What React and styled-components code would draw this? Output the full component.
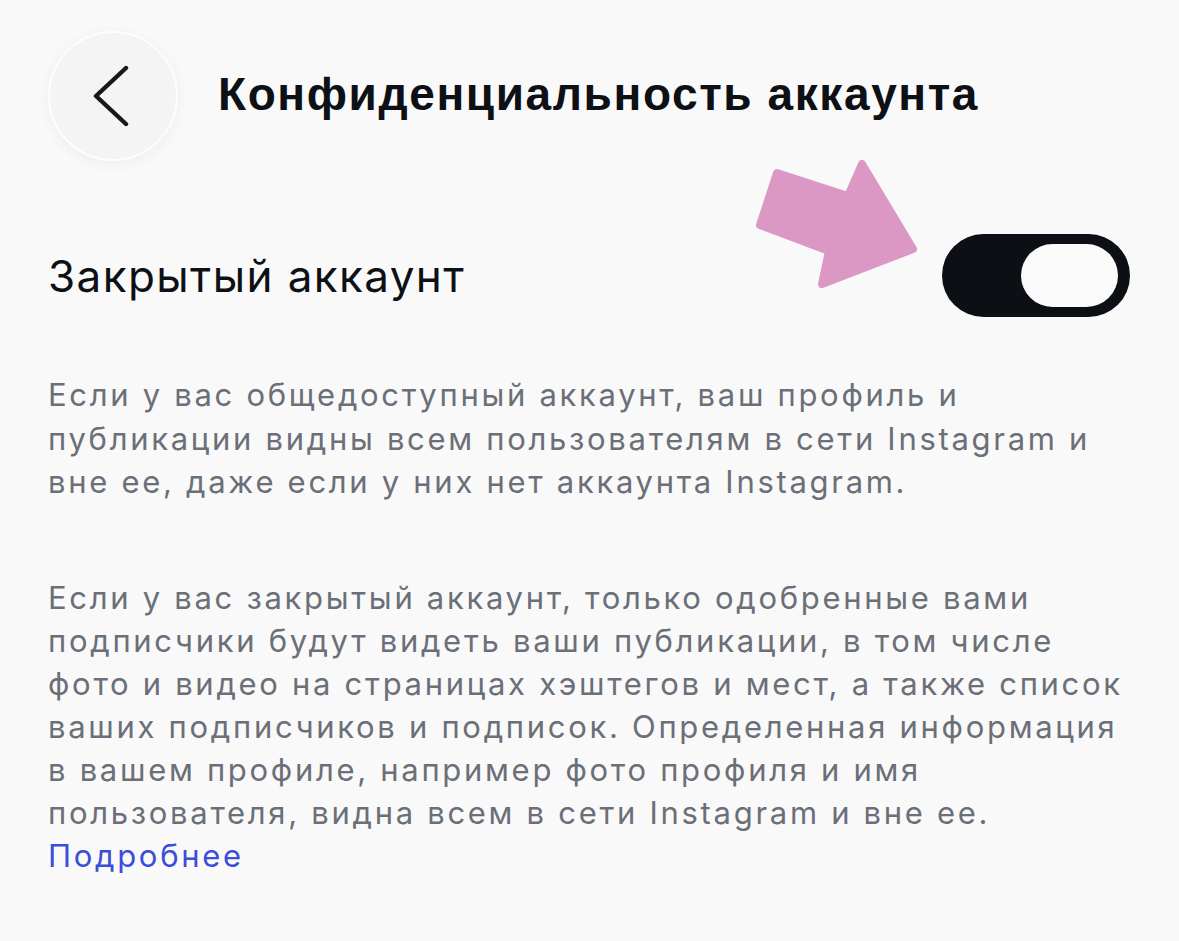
import React from 'react'
import styled, { createGlobalStyle } from 'styled-components'

const GlobalStyle = createGlobalStyle`
    html, body {
        margin: 0;
        padding: 0;
        background: #f9f9f9;
    }
    body {
        font-family: Inter, Roboto, "Noto Sans", sans-serif;
        -webkit-font-smoothing: antialiased;
    }
`

const Page = styled.div`
    width: 1179px;
    height: 941px;
    box-sizing: border-box;
    padding: 31px 49px 0 48px;
    background: #f9f9f9;
    overflow: hidden;
`

const Header = styled.div`
    display: flex;
    align-items: center;
    gap: 40px;
`

const BackButton = styled.button`
    width: 130px;
    height: 130px;
    flex: none;
    padding: 0;
    border-radius: 50%;
    border: 2px solid #fdfdfd;
    background: #f4f4f5;
    box-shadow: 0 3px 14px rgba(0, 0, 0, 0.05);
    display: flex;
    align-items: center;
    justify-content: center;
    cursor: pointer;
`

const Title = styled.h1`
    margin: 0 0 4px;
    font-family: "Liberation Sans", Arial, sans-serif;
    font-weight: 700;
    font-size: 46px;
    color: #0d1015;
    letter-spacing: 1.6px;
`

const SettingRow = styled.div`
    position: relative;
    margin-top: 73px;
    display: flex;
    align-items: center;
    justify-content: space-between;
`

const Label = styled.span`
    font-size: 44px;
    color: #0d1015;
    letter-spacing: 1.4px;
`

const Toggle = styled.button`
    width: 188px;
    height: 83px;
    padding: 0 12px 0 0;
    border: none;
    border-radius: 42px;
    background: ${p => (p.on ? '#0c0f14' : '#d9d9de')};
    display: flex;
    align-items: center;
    justify-content: ${p => (p.on ? 'flex-end' : 'flex-start')};
    cursor: pointer;
`

const Knob = styled.span`
    width: 97px;
    height: 63px;
    border-radius: 32px;
    background: #fafafa;
`

const Pointer = styled.svg`
    position: absolute;
    left: 707px;
    top: -76px;
    width: 170px;
    height: 136px;
    pointer-events: none;
`

const Text = styled.p`
    margin: ${p => p.gap}px 0 0;
    font-size: 31px;
    line-height: ${p => p.lh}px;
    color: #6b6f78;
    letter-spacing: 2.7px;
    white-space: nowrap;
`

const More = styled.a`
    color: #3a4ed8;
    text-decoration: none;
`

const App = () => {
    return (
        <Page>
            <GlobalStyle />
            <Header>
                <BackButton aria-label='Назад'>
                    <svg width='40' height='64' viewBox='0 0 40 64'>
                        <polyline points='33,4 3,32 33,60' fill='none' stroke='#16181c' strokeWidth='4.4'
                            strokeLinecap='round' strokeLinejoin='round' />
                    </svg>
                </BackButton>
                <Title>Конфиденциальность аккаунта</Title>
            </Header>

            <SettingRow>
                <Label>Закрытый аккаунт</Label>
                <Toggle on>
                    <Knob />
                </Toggle>
                <Pointer viewBox='755 158 170 136'>
                    <polygon points='777,173 848,196 862,164 913,249 822,284 829,251 760,225'
                        fill='#db98c4' stroke='#db98c4' strokeWidth='8' strokeLinejoin='round' />
                </Pointer>
            </SettingRow>

            <Text gap={56} lh={43.5}>
                Если у вас общедоступный аккаунт, ваш профиль и<br />
                публикации видны всем пользователям в сети Instagram и<br />
                вне ее, даже если у них нет аккаунта Instagram.
            </Text>

            <Text gap={72} lh={43}>
                Если у вас закрытый аккаунт, только одобренные вами<br />
                подписчики будут видеть ваши публикации, в том числе<br />
                фото и видео на страницах хэштегов и мест, а также список<br />
                ваших подписчиков и подписок. Определенная информация<br />
                в вашем профиле, например фото профиля и имя<br />
                пользователя, видна всем в сети Instagram и вне ее.<br />
                <More href='#'>Подробнее</More>
            </Text>
        </Page>
    )
}

export default App
